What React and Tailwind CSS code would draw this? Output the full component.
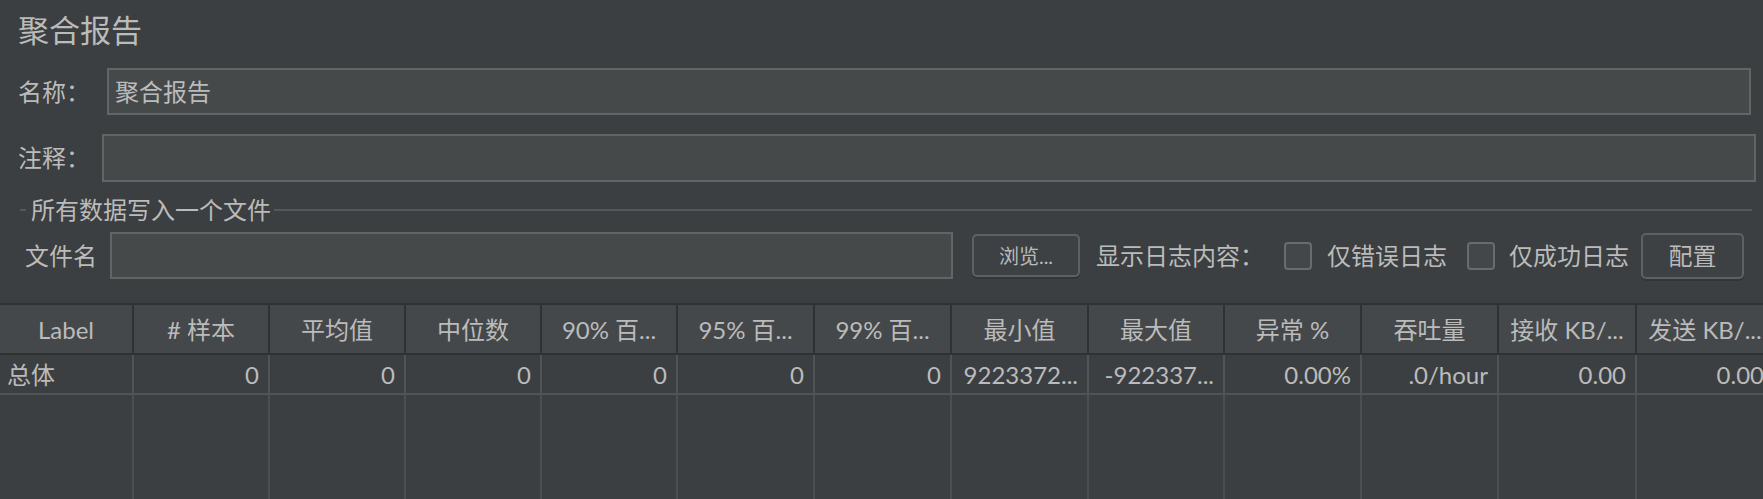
import React from "react";

const headers = [
  "Label",
  "# 样本",
  "平均值",
  "中位数",
  "90% 百...",
  "95% 百...",
  "99% 百...",
  "最小值",
  "最大值",
  "异常 %",
  "吞吐量",
  "接收 KB/...",
  "发送 KB/...",
];

const row = [
  "总体",
  "0",
  "0",
  "0",
  "0",
  "0",
  "0",
  "9223372...",
  "-922337...",
  "0.00%",
  ".0/hour",
  "0.00",
  "0.00",
];

const cols =
  "grid grid-cols-[134px_136px_136px_136px_136px_137px_137px_137px_136px_137px_137px_138px_138px] w-[1776px]";

const Checkbox = () => (
  <div className="w-[28px] h-[28px] shrink-0 rounded-[4px] border-2 border-[#6b6b6b] bg-[#43474a]" />
);

const App = () => {
  return (
    <div className="w-[1763px] h-[499px] overflow-hidden bg-[#3c3f41] text-[#bbbbbb] font-[family-name:Lato,'Noto_Sans_CJK_SC',sans-serif] flex flex-col">
      {/* 标题 */}
      <div className="h-[60px] shrink-0 flex items-center pl-[18px] text-[31px]">
        聚合报告
      </div>

      {/* 名称 */}
      <div className="mt-[8px] h-[47px] shrink-0 flex items-center text-[24px]">
        <span className="w-[107px] shrink-0 pl-[18px]">名称：</span>
        <div className="flex-1 h-full mr-[12px] border-2 border-[#646464] bg-[#45494a] flex items-center pl-[6px]">
          聚合报告
        </div>
      </div>

      {/* 注释 */}
      <div className="mt-[19px] h-[48px] shrink-0 flex items-center text-[24px]">
        <span className="w-[102px] shrink-0 pl-[18px]">注释：</span>
        <div className="flex-1 h-full mr-[7px] border-2 border-[#646464] bg-[#45494a]" />
      </div>

      {/* 所有数据写入一个文件 */}
      <div className="mt-[16px] h-[24px] shrink-0 flex items-center pl-[20px]">
        <div className="w-[6px] h-[2px] bg-[#55585a]" />
        <span className="ml-[5px] text-[24px] leading-none">所有数据写入一个文件</span>
        <div className="flex-1 h-[2px] ml-[3px] mr-[11px] bg-[#55585a]" />
      </div>

      <div className="mt-[10px] h-[47px] shrink-0 flex items-center text-[24px]">
        <span className="w-[110px] shrink-0 pl-[25px]">文件名</span>
        <div className="w-[843px] h-full shrink-0 border-2 border-[#646464] bg-[#45494a]" />
        <button className="ml-[19px] w-[108px] h-[43px] shrink-0 rounded-[5px] border-2 border-[#5e6163] bg-[#3e4143] shadow-[0_2px_0_#333537] text-[20px] text-[#bbbbbb]">
          浏览...
        </button>
        <span className="ml-[16px] w-[188px] shrink-0">显示日志内容：</span>
        <Checkbox />
        <span className="ml-[15px] w-[140px] shrink-0">仅错误日志</span>
        <Checkbox />
        <span className="ml-[14px] w-[132px] shrink-0">仅成功日志</span>
        <button className="w-[103px] h-[46px] shrink-0 rounded-[5px] border-2 border-[#5e6163] bg-[#3e4143] shadow-[0_2px_0_#333537] text-[24px] text-[#bbbbbb]">
          配置
        </button>
      </div>

      {/* 表格 */}
      <div className="mt-[24px] flex-1 flex flex-col min-h-0">
        <div className={`${cols} h-[52px] shrink-0 border-y-2 border-[#2f3133] bg-[#45484a]`}>
          {headers.map((h, i) => (
            <div
              key={i}
              className="border-r-2 border-[#2f3133] flex items-center justify-center pt-[2px] text-[24px] whitespace-nowrap overflow-hidden"
            >
              {h}
            </div>
          ))}
        </div>
        <div className={`${cols} h-[40px] shrink-0 border-b-2 border-[#515456]`}>
          {row.map((v, i) => (
            <div
              key={i}
              className={
                i === 0
                  ? "border-r-2 border-[#515456] flex items-center pl-[7px] pt-[2px] text-[24px] whitespace-nowrap"
                  : "border-r-2 border-[#515456] flex items-center justify-end pr-[9px] pt-[2px] text-[24px] whitespace-nowrap"
              }
            >
              {v}
            </div>
          ))}
        </div>
        <div className={`${cols} flex-1`}>
          {headers.map((h, i) => (
            <div key={i} className="border-r-2 border-[#4b4f51]" />
          ))}
        </div>
      </div>
    </div>
  );
};

export default App;
